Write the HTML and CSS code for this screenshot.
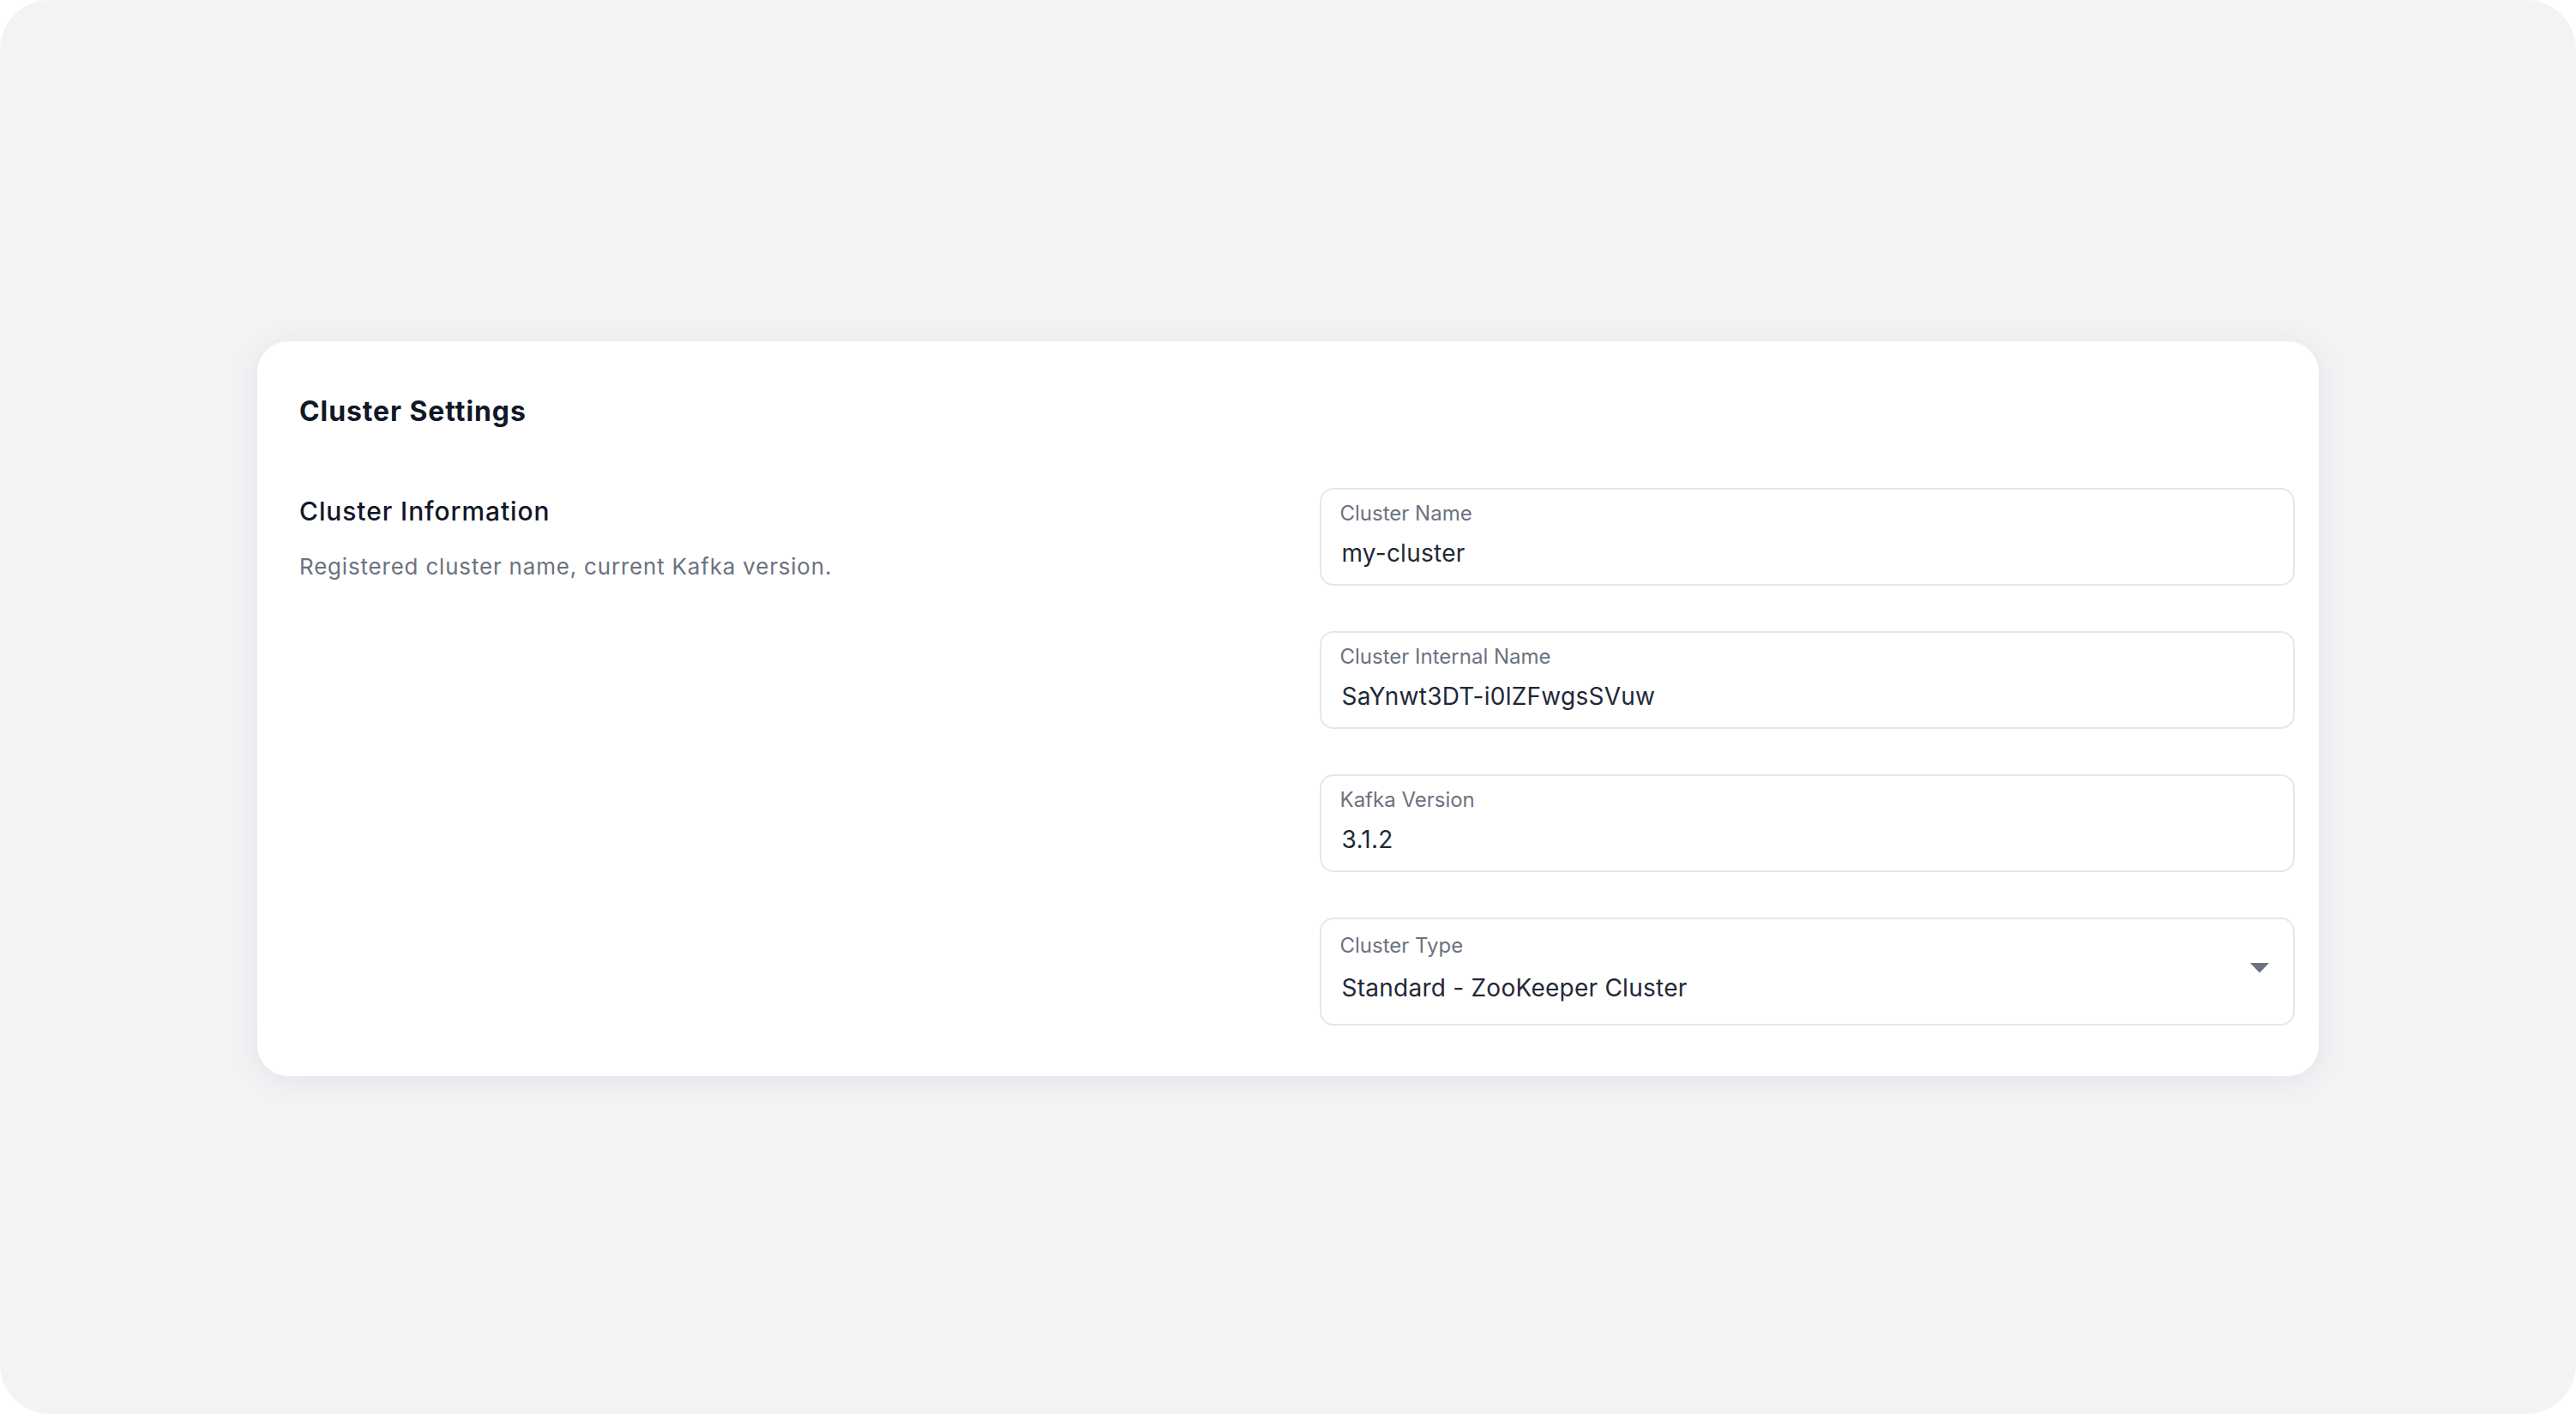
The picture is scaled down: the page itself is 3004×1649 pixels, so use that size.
FILE: index.html
```html
<!DOCTYPE html>
<html lang="en">
<head>
<meta charset="utf-8">
<title>Cluster Settings</title>
<link rel="stylesheet" href="styles.css">
</head>
<body>
<div class="frame">
  <section class="card">
    <h1 class="card-title">Cluster Settings</h1>
    <div class="card-body">
      <div class="info">
        <h2 class="info-title">Cluster Information</h2>
        <p class="info-desc">Registered cluster name, current Kafka version.</p>
      </div>
      <div class="fields">
        <div class="field">
          <div class="field-label">Cluster Name</div>
          <div class="field-value">my-cluster</div>
        </div>
        <div class="field">
          <div class="field-label">Cluster Internal Name</div>
          <div class="field-value">SaYnwt3DT-i0lZFwgsSVuw</div>
        </div>
        <div class="field">
          <div class="field-label">Kafka Version</div>
          <div class="field-value">3.1.2</div>
        </div>
        <div class="field field-select">
          <div class="select-text">
            <div class="field-label">Cluster Type</div>
            <div class="field-value">Standard - ZooKeeper Cluster</div>
          </div>
          <svg class="caret" width="22" height="12" viewBox="0 0 22 12" aria-hidden="true"><path d="M0 0 H22 L11 11.5 Z" fill="#6b7280"/></svg>
        </div>
      </div>
    </div>
  </section>
</div>
</body>
</html>
```

FILE: styles.css
```css
* { box-sizing: border-box; }

html, body {
  margin: 0;
  padding: 0;
  background: #ffffff;
}

body {
  font-family: Inter, "Noto Sans", "Liberation Sans", sans-serif;
  color: #111827;
}

.frame {
  width: 100vw;
  height: 100vh;
  background: #f2f3f5;
  border-radius: 58px;
  padding: 398px 300px 0 300px;
  overflow: hidden;
}

.card {
  background: #ffffff;
  border-radius: 36px;
  box-shadow: 0 4px 34px rgba(17, 24, 39, 0.07);
  padding: 62px 28px 59px 49px;
}

.card-title {
  margin: 0;
  font-size: 32px;
  line-height: 40px;
  font-weight: 700;
  letter-spacing: 0.9px;
  color: #111827;
}

.card-body {
  margin-top: 69px;
  display: grid;
  grid-template-columns: 1fr 1fr;
  column-gap: 52px;
}

.info-title {
  margin: 8px 0 0 0;
  font-size: 30px;
  line-height: 38px;
  font-weight: 500;
  letter-spacing: 0.9px;
  color: #111827;
}

.info-desc {
  margin: 29px 0 0 0;
  font-size: 26px;
  line-height: 34px;
  font-weight: 400;
  letter-spacing: 0.8px;
  color: #6b7280;
}

.fields {
  display: flex;
  flex-direction: column;
  gap: 53px;
}

.field {
  border: 2px solid #e5e7eb;
  border-radius: 16px;
  padding: 12px 22px 18px 22px;
  background: #ffffff;
}

.field-label {
  font-size: 24px;
  line-height: 32px;
  color: #6b7280;
}

.field-value {
  margin-top: 12px;
  margin-left: 2px;
  font-size: 28px;
  line-height: 36px;
  letter-spacing: 0.25px;
  color: #1f2937;
}

.field-select {
  display: flex;
  align-items: center;
  padding: 15px 28px 24px 22px;
}

.select-text {
  flex: 1;
}

.field-select .field-value {
  margin-top: 15px;
}

.caret {
  flex: none;
  display: block;
  margin-top: 0;
}
```
